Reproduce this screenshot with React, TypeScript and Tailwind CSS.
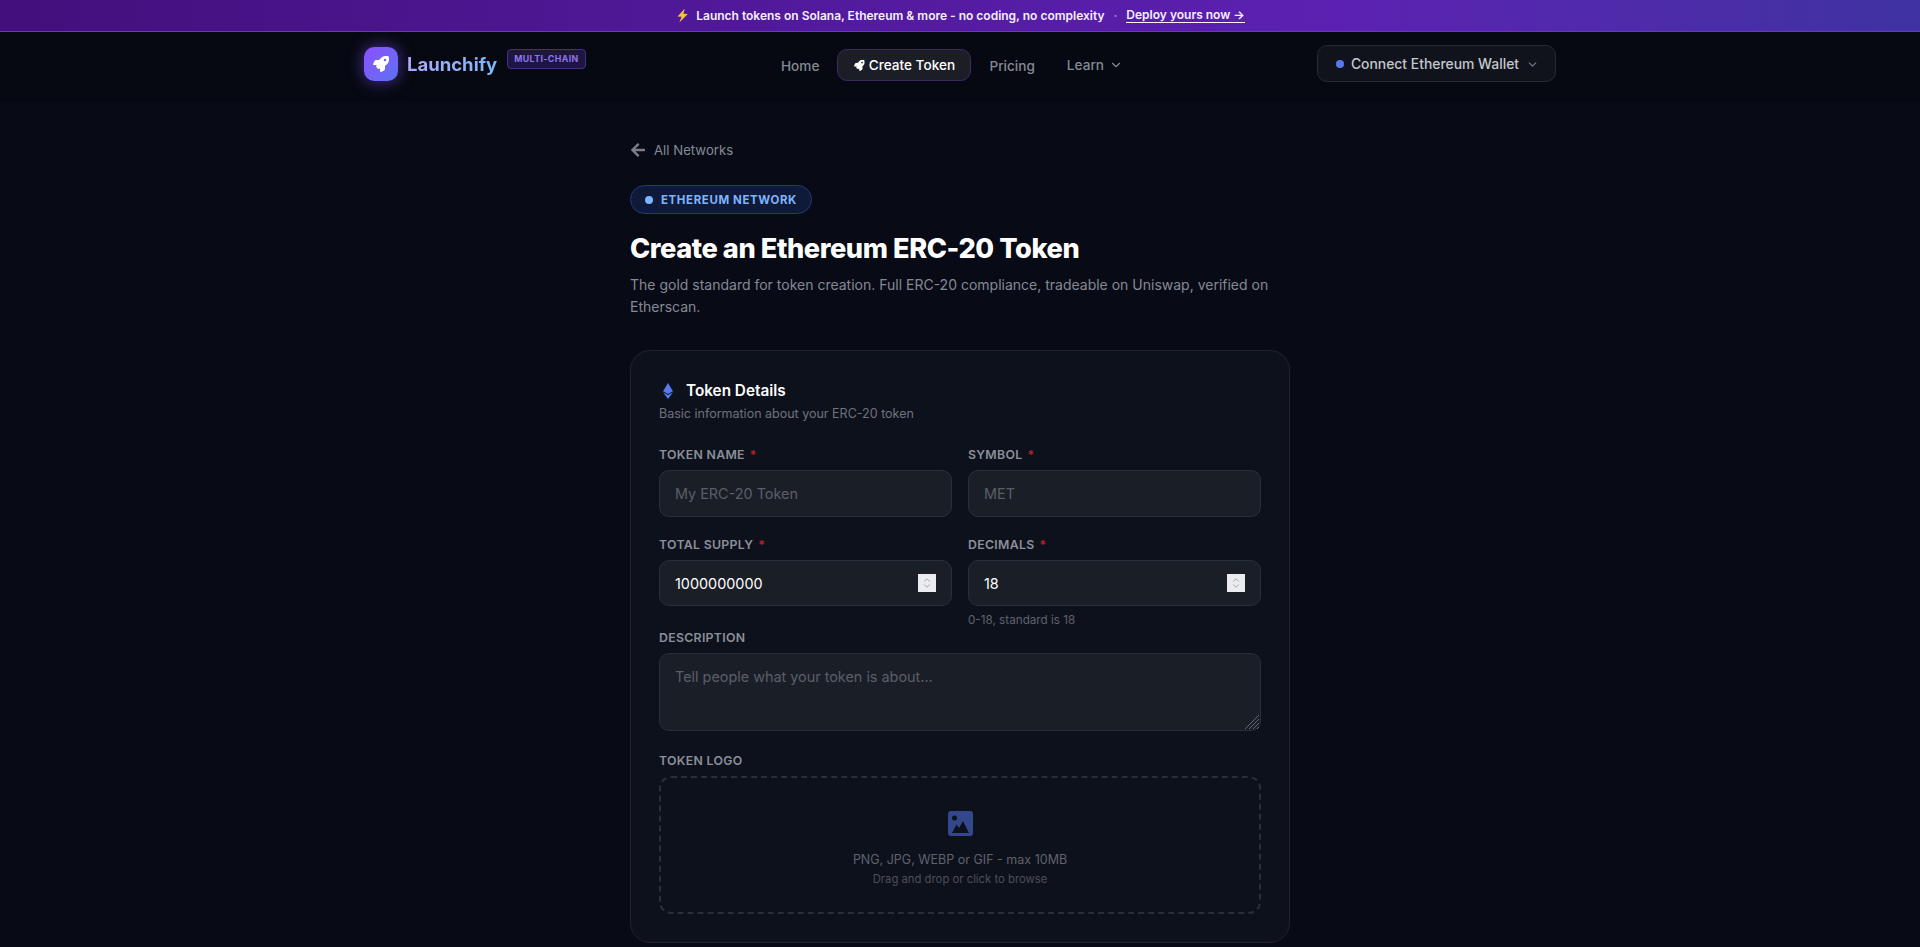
import { FaRocket, FaArrowLeft } from "react-icons/fa";
import { ChevronDown, ChevronUp } from "lucide-react";

function Label({ children, req }: { children: string; req?: boolean }) {
  return (
    <label className="mb-[7px] block text-[12.3px] leading-[16px] font-semibold tracking-[0.3px] text-[#8a8f9a] uppercase">
      {children}
      {req && <span className="ml-[5px] text-[#b4232c]">*</span>}
    </label>
  );
}

const inputCls =
  "block w-full rounded-[10px] border border-[#2a2e38] bg-[#1a1e27] px-[15px] text-[14.4px] text-white placeholder:text-[#5a5e68] outline-none";

function NumberField({ value }: { value: string }) {
  return (
    <div className="relative">
      <input
        type="number"
        className={inputCls + " h-[46px] appearance-none [&::-webkit-inner-spin-button]:appearance-none [&::-webkit-outer-spin-button]:appearance-none"}
        defaultValue={value}
      />
      <div className="absolute top-[14px] right-[16px] flex h-[18px] w-[18px] flex-col items-center justify-center bg-[#ebebf0] text-[#8a8a94]">
        <ChevronUp className="-mb-[2px] h-[10px] w-[12px]" strokeWidth={1.8} />
        <ChevronDown className="-mt-[2px] h-[10px] w-[12px]" strokeWidth={1.8} />
      </div>
    </div>
  );
}

export default function App() {
  return (
    <div className="h-[947px] overflow-hidden bg-[#080b16] font-['Inter',sans-serif] text-white">
      <div className="flex h-[32px] items-center justify-center gap-[9px] border-b border-[#6d36c9] bg-gradient-to-r from-[#430f7c] via-[#5c21b2] via-70% to-[#3f32a2] text-[12px] font-semibold text-[#f3f0fa]">
        <span className="flex items-center gap-[6px]">
          <svg viewBox="0 0 24 24" className="h-[15px] w-[15px]">
            <path d="M15.5 1 4 13.5l6.500.5L7 23 20.500 9.500 13.500 9z" fill="#f2c23c" />
          </svg>
          Launch tokens on Solana, Ethereum &amp; more - no coding, no complexity
        </span>
        <span className="text-[#a98ae0]">·</span>
        <a className="border-b border-white leading-[14px] font-semibold">Deploy yours now →</a>
      </div>

      <header className="h-[70px] bg-[#060911]">
        <div className="mx-auto flex w-[1192px] items-start">
          <div className="flex w-[417px] items-center pt-[15px]">
            <div className="flex h-[34px] w-[34px] items-center justify-center rounded-[10px] bg-gradient-to-br from-[#8b4dff] to-[#5a72f0] shadow-[0_0_16px_rgba(124,77,255,0.6)]">
              <FaRocket className="h-[16px] w-[16px] text-white" />
            </div>
            <span className="ml-[9px] bg-gradient-to-r from-[#b0a8ff] to-[#7fb6f5] bg-clip-text text-[18.5px] leading-[28px] font-bold text-transparent">
              Launchify
            </span>
            <span className="mb-[11px] ml-[10px] rounded-[4px] border border-[#4a2c8a] bg-[#1d1640] px-[6px] py-[2px] text-[8.8px] leading-[14px] font-bold tracking-[0.4px] text-[#9074ee]">
              MULTI-CHAIN
            </span>
          </div>
          <nav className="flex flex-1 items-start pt-[17px] text-[13.6px] font-medium text-[#858994]">
            <a className="mt-[7px] leading-[20px]">Home</a>
            <a className="ml-[18px] flex h-[32px] w-[134px] items-center justify-center gap-[4px] rounded-[10px] border border-[#3a2a5e] bg-[#1b1e27] font-medium text-white">
              <FaRocket className="mt-[1px] h-[11px] w-[11px] rotate-[-5deg] text-white" />
              Create Token
            </a>
            <a className="mt-[7px] ml-[18px] leading-[20px]">Pricing</a>
            <a className="mt-[6px] ml-[32px] flex items-center gap-[5px] leading-[20px]">
              Learn <ChevronDown className="h-[14px] w-[14px]" />
            </a>
          </nav>
          <button className="mt-[13px] flex h-[37px] w-[239px] items-center justify-center gap-[7px] rounded-[10px] border border-[#262a33] bg-[#10131b] pt-px pl-[2px] text-[13.9px] font-medium text-[#c4c7ce]">
            <span className="h-[8px] w-[8px] rounded-full bg-[#5a78ee]" />
            Connect Ethereum Wallet
            <ChevronDown className="h-[13px] w-[13px] text-[#7a7e88]" />
          </button>
        </div>
      </header>

      <main className="mx-auto w-[660px] pt-[38px]">
        <a className="flex items-center gap-[8px] text-[13.2px] leading-[20px] text-[#858994]">
          <FaArrowLeft className="h-[16px] w-[16px] text-[#7a7e88]" /> All Networks
        </a>
        <div className="mt-[25px] flex h-[29px] w-[182px] items-center justify-center gap-[8px] rounded-full border border-[#1f3a7a] bg-[#0f1a38] pt-[2px] text-[11.5px] font-bold tracking-[0.6px] text-[#7db4ff]">
          <span className="-mt-[2px] h-[8px] w-[8px] rounded-full bg-[#7db4ff]" />
          ETHEREUM NETWORK
        </div>
        <h1 className="mt-[17px] text-[27.2px] leading-[36px] font-extrabold tracking-[-0.43px] text-white">
          Create an Ethereum ERC-20 Token
        </h1>
        <p className="mt-[7px] text-[14px] leading-[22px] text-[#858994]">
          The gold standard for token creation. Full ERC-20 compliance, tradeable on Uniswap, verified on Etherscan.
        </p>

        <section className="mt-[32px] h-[593px] rounded-[20px] border border-[#20242e] bg-[#0d111b] px-[28px] pt-[29px]">
          <div className="flex items-center gap-[13px] pl-[4px]">
            <svg viewBox="0 0 10 16" className="h-[16px] w-[10px]" fill="#5a78ee">
              <path d="M5 0 10 8.200 5 11 0 8.200z" />
              <path d="M5 12.100 10 9.300 5 16 0 9.300z" />
            </svg>
            <h2 className="text-[15.3px] leading-[22px] font-semibold text-white">Token Details</h2>
          </div>
          <p className="mt-[3px] text-[12.5px] leading-[18px] text-[#6f737e]">Basic information about your ERC-20 token</p>

          <div className="mt-[24px] grid grid-cols-2 gap-x-[16px]">
            <div>
              <Label req>Token Name</Label>
              <input className={inputCls + " h-[47px]"} placeholder="My ERC-20 Token" />
            </div>
            <div>
              <Label req>Symbol</Label>
              <input className={inputCls + " h-[47px]"} placeholder="MET" />
            </div>
            <div className="mt-[20px]">
              <Label req>Total Supply</Label>
              <NumberField value="1000000000" />
            </div>
            <div className="mt-[20px]">
              <Label req>Decimals</Label>
              <NumberField value="18" />
              <p className="mt-[6px] text-[11.7px] leading-[16px] text-[#5f636d]">0-18, standard is 18</p>
            </div>
          </div>

          <div className="mt-[2px]">
            <Label>Description</Label>
            <div className="relative">
              <textarea
                className="block h-[78px] w-full resize-none rounded-[10px] border border-[#2a2e38] bg-[#1a1e27] px-[15px] py-[12px] text-[14.4px] leading-[22px] text-white outline-none placeholder:text-[#5a5e68]"
                placeholder="Tell people what your token is about..."
              />
              <svg viewBox="0 0 16 16" className="absolute right-[1px] bottom-[1px] h-[16px] w-[16px]" stroke="#6a6d76" strokeWidth="0.9">
                <path d="M1 15 15 1M5 15 15 5M9 15 15 9M13 15l2-2" />
              </svg>
            </div>
          </div>

          <div className="mt-[22px]">
            <Label>Token Logo</Label>
            <div className="flex h-[138px] flex-col items-center rounded-[12px] border-2 border-dashed border-[#2a2e38] pt-[33px]">
              <svg viewBox="0 0 25 25" className="h-[25px] w-[25px]">
                <rect width="25" height="25" rx="3" fill="#33488c" />
                <circle cx="6.500" cy="7" r="2.500" fill="#0d111b" />
                <path d="M4 22 8.500 13.500 11 17l4-7 6 12z" fill="#0d111b" />
              </svg>
              <p className="mt-[15px] text-[12.5px] leading-[18px] text-[#5f636d]">PNG, JPG, WEBP or GIF - max 10MB</p>
              <p className="mt-[2px] text-[11.3px] leading-[16px] text-[#4b4f59]">Drag and drop or click to browse</p>
            </div>
          </div>
        </section>
      </main>
    </div>
  );
}
